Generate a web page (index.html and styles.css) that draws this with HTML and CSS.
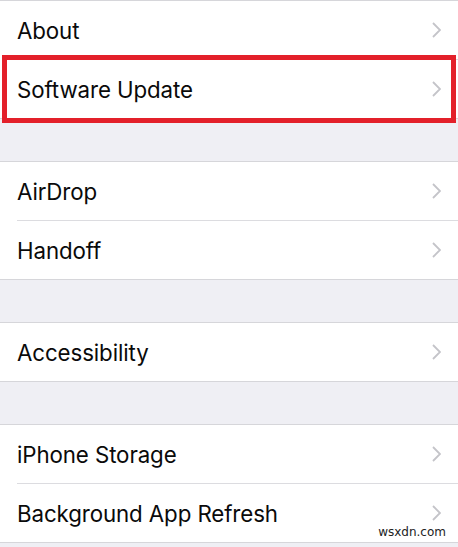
FILE: index.html
```html
<!DOCTYPE html>
<html>
<head>
<meta charset="utf-8">
<link rel="stylesheet" href="styles.css">
</head>
<body>
<div class="page">
  <div class="group">
    <div class="row"><span class="label">About</span><svg class="chev" viewBox="0 0 9 16"><path d="M1 1 L8 8 L1 15"/></svg></div>
    <div class="row highlighted"><span class="label">Software Update</span><svg class="chev" viewBox="0 0 9 16"><path d="M1 1 L8 8 L1 15"/></svg><div class="redbox"></div></div>
  </div>
  <div class="group">
    <div class="row"><span class="label">AirDrop</span><svg class="chev" viewBox="0 0 9 16"><path d="M1 1 L8 8 L1 15"/></svg></div>
    <div class="row"><span class="label">Handoff</span><svg class="chev" viewBox="0 0 9 16"><path d="M1 1 L8 8 L1 15"/></svg></div>
  </div>
  <div class="group">
    <div class="row"><span class="label">Accessibility</span><svg class="chev" viewBox="0 0 9 16"><path d="M1 1 L8 8 L1 15"/></svg></div>
  </div>
  <div class="group">
    <div class="row"><span class="label">iPhone Storage</span><svg class="chev" viewBox="0 0 9 16"><path d="M1 1 L8 8 L1 15"/></svg></div>
    <div class="row"><span class="label">Background App Refresh</span><svg class="chev" viewBox="0 0 9 16"><path d="M1 1 L8 8 L1 15"/></svg></div>
  </div>
  <div class="watermark">wsxdn.com</div>
</div>
</body>
</html>
```

FILE: styles.css
```css
html, body {
  margin: 0;
  padding: 0;
  background: #efeff4;
}
.page {
  position: relative;
  width: 458px;
  height: 547px;
  overflow: hidden;
  display: flex;
  flex-direction: column;
  gap: 42px;
  font-family: Inter, "Liberation Sans", sans-serif;
}
.group {
  background: #fff;
  border-top: 1px solid #d6d6da;
  border-bottom: 1px solid #d6d6da;
  padding-left: 17px;
}
.row {
  position: relative;
  height: 58px;
  display: flex;
  align-items: center;
  justify-content: space-between;
  padding-right: 17px;
}
.row + .row {
  border-top: 1px solid #dcdce0;
}
.label {
  font-size: 22.3px;
  color: #0a0a0a;
  letter-spacing: -0.1px;
}
.chev {
  width: 9px;
  height: 16px;
  fill: none;
  stroke: #c4c4c9;
  stroke-width: 1.8;
}
.redbox {
  position: absolute;
  top: -5px;
  bottom: -5px;
  left: -15px;
  right: 2px;
  border: 5px solid #e3202a;
}
.watermark {
  position: absolute;
  right: 12px;
  bottom: 8px;
  font-family: "DejaVu Sans", sans-serif;
  font-size: 12px;
  color: #222;
}
```
